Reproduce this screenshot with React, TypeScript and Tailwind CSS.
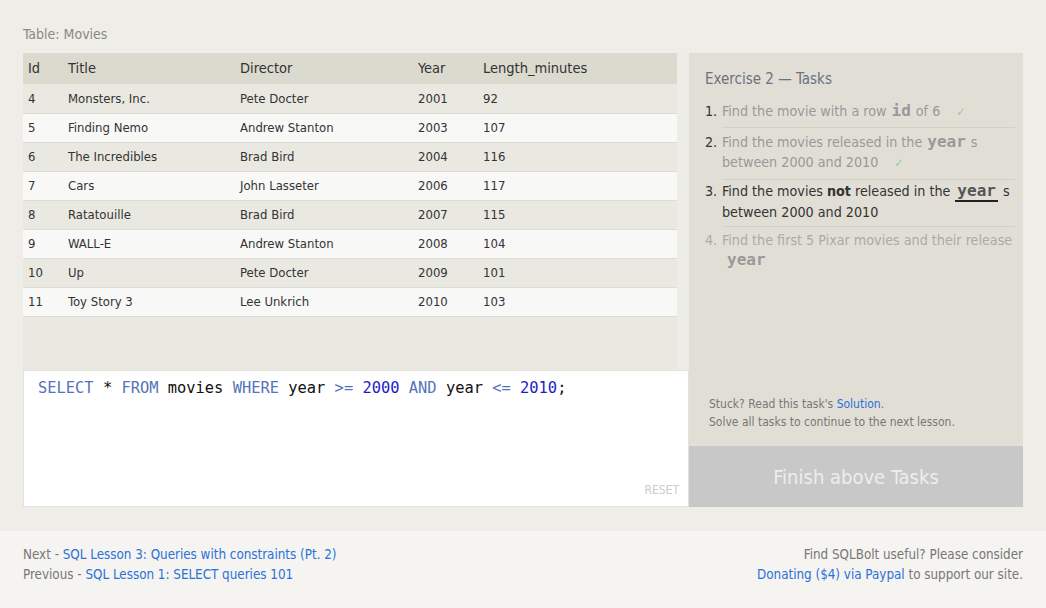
import React from "react";

const rows = [
  ["4", "Monsters, Inc.", "Pete Docter", "2001", "92"],
  ["5", "Finding Nemo", "Andrew Stanton", "2003", "107"],
  ["6", "The Incredibles", "Brad Bird", "2004", "116"],
  ["7", "Cars", "John Lasseter", "2006", "117"],
  ["8", "Ratatouille", "Brad Bird", "2007", "115"],
  ["9", "WALL-E", "Andrew Stanton", "2008", "104"],
  ["10", "Up", "Pete Docter", "2009", "101"],
  ["11", "Toy Story 3", "Lee Unkrich", "2010", "103"],
];

const sans = "font-['DejaVu_Sans_Condensed','Liberation_Sans',sans-serif]";
const mono = "font-['DejaVu_Sans_Mono',monospace]";

const Code = ({ children, dark }: { children: React.ReactNode; dark?: boolean }) => (
  <span
    className={`${mono} mx-[5px] inline-block text-[16px] leading-[18px] font-bold ${dark ? "text-[#555] border-b-2 border-[#222] px-[2px]" : "text-[#999]"}`}
  >
    {children}
  </span>
);

const Check = () => <span className="ml-3 text-[12px] text-[#8fce8f]">✓</span>;

const App = () => {
  return (
    <div className={`min-h-[608px] w-[1046px] ${sans}`}>
      <div className="bg-[#efede7] px-[23px] pt-[24px] pb-[24px]">
        <div className="mb-[9px] h-5 text-[14px] leading-5 text-[#888]">Table: Movies</div>

        <div className="flex h-[454px]">
          {/* query results + editor */}
          <div className="flex w-[666px] flex-col">
            <div className="flex h-[317px] bg-[#e9e8e1]">
              <table className="w-[654px] table-fixed border-collapse self-start text-left">
                <colgroup>
                  <col className="w-[40px]" />
                  <col className="w-[172px]" />
                  <col className="w-[178px]" />
                  <col className="w-[65px]" />
                  <col />
                </colgroup>
                <thead>
                  <tr className="h-[31px] bg-[#dbdacf]">
                    {["Id", "Title", "Director", "Year", "Length_minutes"].map((h) => (
                      <th key={h} className="px-[5px] text-[14.5px] font-normal text-[#333]">
                        {h}
                      </th>
                    ))}
                  </tr>
                </thead>
                <tbody>
                  {rows.map((r, i) => (
                    <tr
                      key={r[0]}
                      className={`h-[29px] border-b border-[#dedcd4] ${i % 2 === 0 ? "bg-[#e9e8e1]" : "bg-[#f8f8f7]"}`}
                    >
                      {r.map((c, j) => (
                        <td key={j} className="px-[5px] text-[13px] text-[#333]">
                          {c}
                        </td>
                      ))}
                    </tr>
                  ))}
                </tbody>
              </table>
              <div className="flex-1 bg-[#edece6]" />
            </div>

            <div className="relative flex-1 border border-[#e3e1da] bg-white px-[14px] pt-[5px]">
              <div className={`${mono} text-[15.4px] leading-6 text-[#111]`}>
                <span className="text-[#5574b9]">SELECT</span> * <span className="text-[#5574b9]">FROM</span> movies{" "}
                <span className="text-[#5574b9]">WHERE</span> year <span className="text-[#5574b9]">&gt;=</span>{" "}
                <span className="text-[#1c1cc8]">2000</span> <span className="text-[#5574b9]">AND</span> year{" "}
                <span className="text-[#5574b9]">&lt;=</span> <span className="text-[#1c1cc8]">2010</span>;
              </div>
              <div className="absolute right-[9px] bottom-[7px] text-[12px] text-[#ccc]">RESET</div>
            </div>
          </div>

          {/* tasks panel */}
          <div className="flex w-[334px] flex-col bg-[#e1dfd5]">
            <div className="flex-1 pt-[15px] pr-2 pl-4">
              <div className="mb-[10px] text-[15px] text-[#6b7180]">Exercise 2 — Tasks</div>
              <ol className="text-[14.2px] leading-5">
                <li className="flex">
                  <span className="w-[17px] shrink-0 text-[#333]">1.</span>
                  <div className="flex-1 border-b border-[#d3d1c6] pb-[5px] text-[#999]">
                    Find the movie with a row<Code>id</Code>of 6 <Check />
                  </div>
                </li>
                <li className="flex pt-[4px]">
                  <span className="w-[17px] shrink-0 text-[#333]">2.</span>
                  <div className="flex-1 border-b border-[#d3d1c6] pb-[6px] text-[#999]">
                    Find the movies released in the<Code>year</Code>s between 2000 and 2010 <Check />
                  </div>
                </li>
                <li className="flex pt-[1px]">
                  <span className="w-[17px] shrink-0 text-[#333]">3.</span>
                  <div className="flex-1 border-b border-[#d3d1c6] pb-[4px] text-[#333]">
                    Find the movies <span className="font-semibold">not</span> released in the<Code dark>year</Code>s between 2000 and 2010
                  </div>
                </li>
                <li className="flex pt-[3px] text-[#aaa]">
                  <span className="w-[17px] shrink-0">4.</span>
                  <div className="flex-1">
                    Find the first 5 Pixar movies and their release <br />
                    <Code>year</Code>
                  </div>
                </li>
              </ol>
            </div>
            <div className="px-5 pb-[15px] text-[12px] leading-[18px] text-[#777]">
              <div>
                Stuck? Read this task's <a className="text-[#2a6fd8]">Solution</a>.
              </div>
              <div>Solve all tasks to continue to the next lesson.</div>
            </div>
            <div className="flex h-[61px] items-center justify-center bg-[#c8c8c8] text-[20px] text-[#eeeeec]">
              Finish above Tasks
            </div>
          </div>
        </div>
      </div>

      <div className="flex h-[78px] justify-between bg-[#f5f4f1] px-[23px] pt-[14px] text-[13.3px] leading-5 text-[#777]">
        <div>
          <div>
            Next - <a className="text-[#2b72d8]">SQL Lesson 3: Queries with constraints (Pt. 2)</a>
          </div>
          <div>
            Previous - <a className="text-[#2b72d8]">SQL Lesson 1: SELECT queries 101</a>
          </div>
        </div>
        <div className="text-right">
          <div>Find SQLBolt useful? Please consider</div>
          <div>
            <a className="text-[#2b72d8]">Donating ($4) via Paypal</a> to support our site.
          </div>
        </div>
      </div>
    </div>
  );
};

export default App;
